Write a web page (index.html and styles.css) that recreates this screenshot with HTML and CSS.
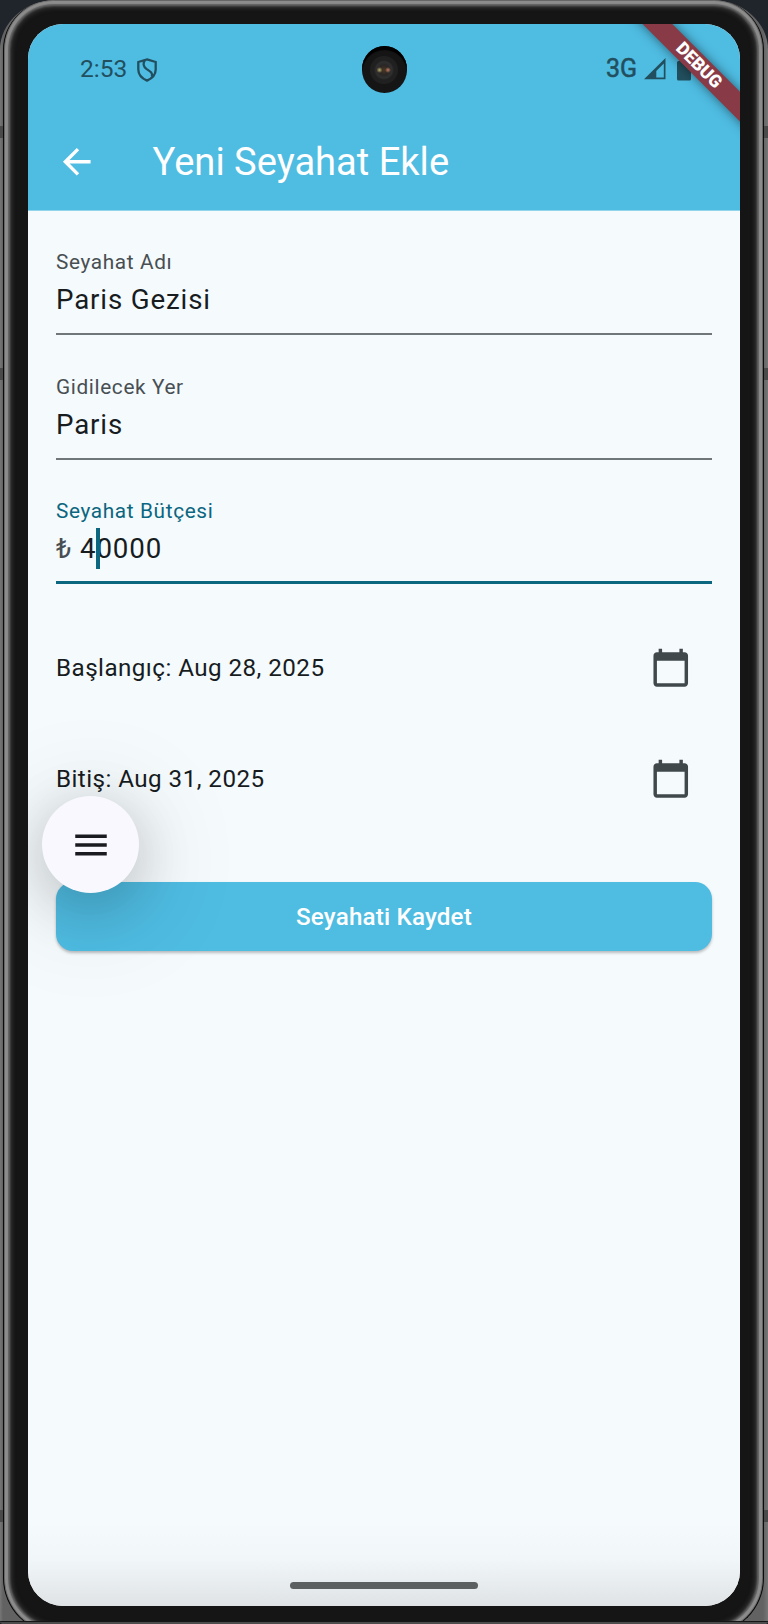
FILE: index.html
```html
<!DOCTYPE html>
<html lang="tr">
<head>
<meta charset="utf-8">
<title>Yeni Seyahat Ekle</title>
<link rel="stylesheet" href="styles.css">
</head>
<body>
<div class="device">
  <i class="notch notch-a"></i><i class="notch notch-b"></i><i class="notch notch-c"></i>
  <div class="rim">
  <main class="screen">
    <header class="top">
      <div class="status">
        <span class="clock">2:53</span>
        <svg class="shield" viewBox="0 0 20 24"><path d="M10 1.400 18.700 4v7.400c0 5-3.500 8.800-8.700 11.200C4.800 20.200 1.300 16.400 1.300 11.400V4z"/><path d="M8 2C5.500 5.200 6.500 8.800 9.400 10.900c4.300 2.800 6.700 4.500 5.400 7.600"/></svg>
        <span class="network">3G</span>
        <svg class="signal" viewBox="0 0 22 22"><path fill-rule="evenodd" d="M0 21.300 21.500 0v21.300zM12.300 19.600h7.500V5.400l-7.500 7.500z"/></svg>
        <svg class="battery" viewBox="0 0 14 23"><path d="M4 1h6v2h2.500Q14 3 14 4.500V21q0 1.500-1.500 1.500h-11Q0 22.500 0 21V4.500Q0 3 1.500 3H4z"/></svg>
      </div>
      <div class="appbar">
        <svg class="back" viewBox="0 0 24 24"><path d="M20 11H7.830l5.590-5.590L12 4l-8 8 8 8 1.410-1.410L7.830 13H20v-2z"/></svg>
        <h1 class="title">Yeni Seyahat Ekle</h1>
      </div>
    </header>
    <section class="form">
      <div class="field"><label class="label">Seyahat Adı</label><div class="value">Paris Gezisi</div></div>
      <div class="field"><label class="label">Gidilecek Yer</label><div class="value">Paris</div></div>
      <div class="field focused"><label class="label">Seyahat Bütçesi</label><div class="value"><span class="prefix">₺</span><span class="amount">4<i class="caret"></i>0000</span></div></div>
      <div class="dates">
        <div class="date"><span>Başlangıç: Aug 28, 2025</span><svg class="calendar" viewBox="0 0 24 24"><path d="M20 3h-1V1h-2v2H7V1H5v2H4c-1.100 0-2 .9-2 2v16c0 1.100.9 2 2 2h16c1.100 0 2-.9 2-2V5c0-1.100-.9-2-2-2zm0 18H4V8h16v13z"/></svg></div>
        <div class="date"><span>Bitiş: Aug 31, 2025</span><svg class="calendar" viewBox="0 0 24 24"><path d="M20 3h-1V1h-2v2H7V1H5v2H4c-1.100 0-2 .9-2 2v16c0 1.100.9 2 2 2h16c1.100 0 2-.9 2-2V5c0-1.100-.9-2-2-2zm0 18H4V8h16v13z"/></svg></div>
      </div>
      <button class="save">Seyahati Kaydet</button>
    </section>
    <div class="fade"><div class="handle"></div></div>
    <div class="fab"><svg viewBox="0 0 24 24"><path d="M3 18h18v-2H3v2zm0-5h18v-2H3v2zm0-7v2h18V6H3z"/></svg></div>
    <div class="camera"><div class="lens"></div></div>
    <div class="banner">DEBUG</div>
  </main>
  </div>
  <div class="base"></div>
</div>
</body>
</html>
```
FILE: styles.css
```css
* { box-sizing: border-box; }
body {
  margin: 0;
  width: 768px;
  height: 1624px;
  overflow: hidden;
  background: #20242b;
  font-family: Roboto, "Noto Sans", sans-serif;
}
.device {
  position: relative;
  width: 768px;
  height: 1624px;
  overflow: hidden;
  padding: 0 4px 0 3px;
  background: linear-gradient(90deg, #777 0, #626262 3px, #626262 763px, #777 768px);
  border-radius: 56px 56px 4px 4px / 50px 50px 4px 4px;
}
.notch {
  position: absolute;
  left: 0;
  width: 768px;
  height: 12px;
  background: #4a4a4a;
}
.notch-a { top: 126px; }
.notch-b { top: 368px; }
.notch-c { top: 1510px; }
.rim {
  position: relative;
  height: 1634px;
  padding: 24px 21px 27px 25px;
  background: #151515;
  border: solid #0b0b0b;
  border-width: 0 1px 1px 1px;
  border-radius: 50px 50px 56px 56px;
  box-shadow:
    inset 0 0 0 1px #666,
    inset 0 0 1px 4px #8c8c8c,
    inset 0 0 2px 6px #646464,
    inset 0 0 4px 8px #343434;
}
.base {
  position: absolute;
  left: 0;
  top: 1621px;
  width: 768px;
  height: 3px;
  border-top: 1px solid #151515;
  background: #4c4c4c;
}
.screen {
  position: relative;
  display: flex;
  flex-direction: column;
  width: 712px;
  height: 1582px;
  margin-left: -1px;
  overflow: hidden;
  border-radius: 35px;
  background: #f5fafd;
}
.top {
  height: 187px;
  flex: none;
  background: #4fbce2;
  border-bottom: 1px solid #91d4eb;
}
.status {
  display: flex;
  align-items: center;
  height: 90px;
  padding: 0 49px 0 52px;
  color: #224f5e;
  font-size: 24.500px;
}
.clock { line-height: 30px; }
.status svg { fill: currentColor; }
.status .shield {
  width: 20px;
  height: 24px;
  margin: 1px 0 0 10px;
  fill: none;
  stroke: currentColor;
  stroke-width: 2.300;
}
.network {
  margin-left: auto;
  font-size: 25px;
  line-height: 30px;
  -webkit-text-stroke: .5px currentColor;
}
.signal { width: 22px; height: 22px; margin: 0 11px 0 7px; }
.battery { width: 14px; height: 23px; }
.appbar {
  display: flex;
  align-items: center;
  height: 96px;
  padding: 0 28px;
  color: #fff;
}
.back { width: 41.500px; height: 41.500px; margin-left: -.5px; fill: #fff; }
.title {
  margin: 0 0 0 55.500px;
  font-size: 38.100px;
  font-weight: 400;
  line-height: 48px;
}
.form {
  display: flex;
  flex-direction: column;
  padding: 36px 28px 0;
  color: #171c1f;
}
.field {
  height: 88px;
  margin-bottom: 36.700px;
  border-bottom: 2px solid #70777b;
}
.label {
  display: block;
  height: 32px;
  padding-top: 1px;
  color: #484f53;
  font-size: 20.800px;
  line-height: 28px;
  letter-spacing: .63px;
}
.value {
  display: flex;
  height: 42px;
  font-size: 27.700px;
  line-height: 42px;
  letter-spacing: .85px;
}
.focused { height: 87.500px; border-bottom: 3px solid #0b6680; }
.focused .label { color: #0b6680; }
.prefix { width: 24px; color: #484f53; }
.caret {
  position: absolute;
  width: 4px;
  height: 41px;
  background: #0b6680;
}
.dates { margin-top: -1px; }
.date {
  display: flex;
  align-items: center;
  justify-content: space-between;
  height: 97px;
  margin-bottom: 14px;
  padding-right: 20.500px;
  font-size: 24.200px;
  letter-spacing: .45px;
}
.calendar { width: 41.500px; height: 41.500px; fill: #40484c; }
.save {
  height: 69px;
  margin-top: 40px;
  padding: 1px 0 0;
  border: 0;
  border-radius: 17px;
  background: #4fbce2;
  box-shadow: 0 2px 3px rgba(0, 0, 0, .25);
  color: #fff;
  font: 500 24.200px/68px Roboto, sans-serif;
  letter-spacing: .17px;
}
.fade {
  display: flex;
  align-items: flex-end;
  justify-content: center;
  height: 85px;
  margin-top: auto;
  padding-bottom: 17px;
  background: linear-gradient(#f5fafd, #f1f6f9 45%, #dfe3e6);
}
.handle { width: 188px; height: 7px; border-radius: 4px; background: #5d6061; }
.fab {
  position: absolute;
  left: 14px;
  top: 772px;
  display: grid;
  place-items: center;
  width: 97px;
  height: 97px;
  border-radius: 50%;
  background: #f8f8fe;
  box-shadow: 0 12px 54px rgba(0, 0, 0, .18), 0 14px 100px 16px rgba(0, 0, 0, .1);
}
.fab svg { width: 42px; height: 42px; fill: #1a1b20; }
.camera {
  position: absolute;
  left: 333.500px;
  top: 22px;
  display: grid;
  place-items: center;
  width: 45px;
  height: 46.500px;
  border-radius: 50%;
  background: #151515;
  box-shadow: inset 0 4px 1px #000;
}
.lens {
  width: 28px;
  height: 28px;
  margin-top: 2px;
  border-radius: 50%;
  background:
    radial-gradient(circle at 9.500px 14px, #b9b06e 0, transparent 3px),
    radial-gradient(circle at 18px 14px, #c37b60 0, transparent 3px),
    radial-gradient(circle, #493622 0, #292626 5px, #303030 8px, #202020 10px, #202020 14px);
}
.banner {
  position: absolute;
  left: 560.500px;
  top: 30.500px;
  width: 220px;
  height: 20.600px;
  transform: rotate(45deg);
  background: #883b46;
  box-shadow: 0 0 11px rgba(0, 0, 0, .5);
  color: #fff;
  font-size: 17.700px;
  font-weight: 900;
  line-height: 20.600px;
  text-align: center;
}
```
